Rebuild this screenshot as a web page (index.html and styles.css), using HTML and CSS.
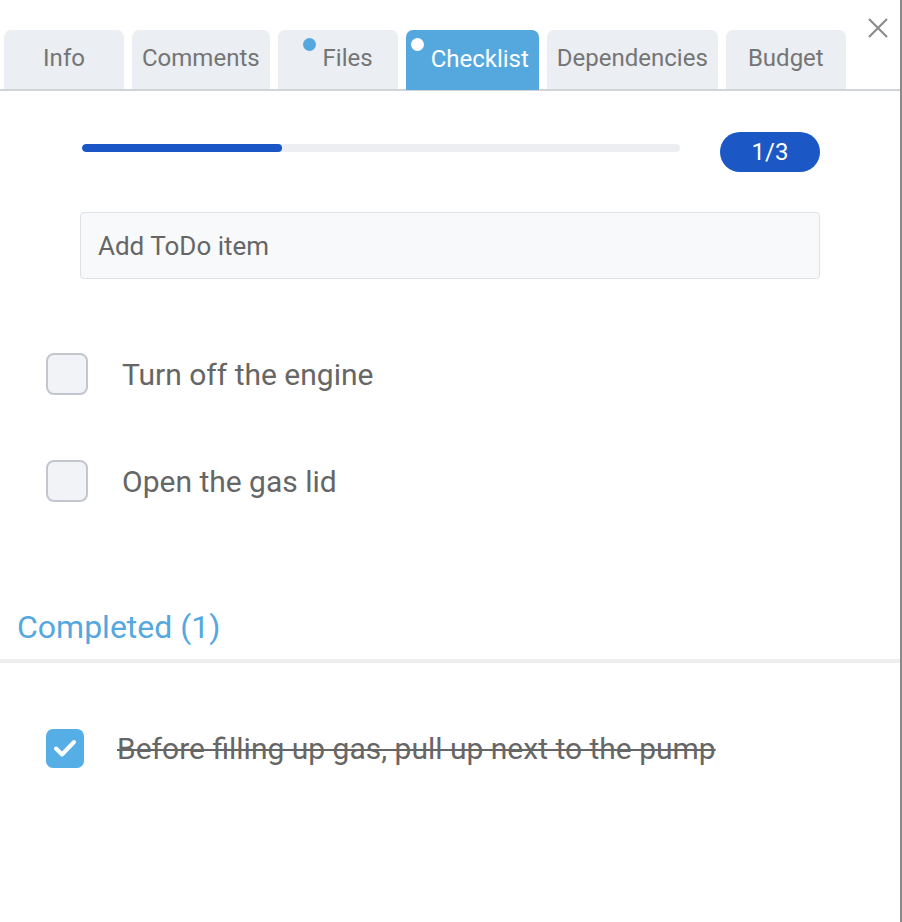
FILE: index.html
```html
<!DOCTYPE html>
<html>
<head>
<meta charset="utf-8">
<link rel="stylesheet" href="styles.css">
</head>
<body>
<div class="panel">
  <div class="tabs">
    <div class="tab">Info</div>
    <div class="tab">Comments</div>
    <div class="tab"><span class="dot"></span>Files</div>
    <div class="tab active"><span class="dot"></span>Checklist</div>
    <div class="tab">Dependencies</div>
    <div class="tab">Budget</div>
  </div>
  <button class="close" aria-label="Close">
    <svg width="20" height="20" viewBox="0 0 20 20"><path d="M1 1L19 19M19 1L1 19" stroke="#8c8c8c" stroke-width="2.2" fill="none"/></svg>
  </button>
  <div class="progress-row">
    <div class="track"><div class="fill" style="width:33.4%"></div></div>
    <div class="badge">1/3</div>
  </div>
  <div class="add">Add ToDo item</div>
  <ul class="items">
    <li class="item"><span class="box"></span><span class="label">Turn off the engine</span></li>
    <li class="item"><span class="box"></span><span class="label">Open the gas lid</span></li>
  </ul>
  <div class="completed-title">Completed (1)</div>
  <div class="divider"></div>
  <ul class="items done">
    <li class="item"><span class="box checked"><svg width="38" height="38" viewBox="0 0 38 38"><path d="M10 19.5L16 25.5L28 13" stroke="#fff" stroke-width="4" fill="none" stroke-linecap="round" stroke-linejoin="round"/></svg></span><span class="label">Before filling up gas, pull up next to the pump</span></li>
  </ul>
</div>
</body>
</html>
```
FILE: styles.css
```css
* { box-sizing: border-box; }
html, body { margin: 0; padding: 0; background: #fff; }
body { font-family: Roboto, "Liberation Sans", sans-serif; }
.panel {
  position: relative;
  width: 902px;
  height: 922px;
  border-right: 2px solid #8a8a8a;
  overflow: hidden;
}
.tabs {
  display: flex;
  gap: 8px;
  padding: 30px 0 0 4px;
  border-bottom: 2px solid #d0d4d9;
  height: 91px;
  align-items: flex-start;
}
.tab {
  height: 59px;
  min-width: 120px;
  padding: 0 10px 3px;
  background: #ebeef2;
  color: #757575;
  font-size: 24px;
  border-radius: 7px 7px 0 0;
  display: flex;
  align-items: center;
  justify-content: center;
}
.tab.active {
  background: #55a8de;
  color: #fff;
  height: 60px;
  padding: 0 10px 3px 5px;
}
.dot {
  align-self: flex-start;
  flex: none;
  width: 13px;
  height: 13px;
  margin: 8px 7px 0 0;
  border-radius: 50%;
  background: #55a8de;
}
.tab.active .dot { background: #fff; }
.close {
  position: absolute;
  left: 868px;
  top: 18px;
  width: 20px;
  height: 20px;
  padding: 0;
  border: 0;
  background: none;
  display: block;
}
.close svg { display: block; }
.progress-row {
  display: flex;
  align-items: flex-start;
  gap: 40px;
  margin: 41px 0 0 82px;
}
.track {
  width: 598px;
  height: 8px;
  margin-top: 12px;
  background: #eceef2;
  border-radius: 4px;
  overflow: hidden;
}
.fill {
  height: 100%;
  background: #1a56c6;
  border-radius: 4px;
}
.badge {
  width: 100px;
  height: 40px;
  border-radius: 20px;
  background: #1b57c5;
  color: #fff;
  font-size: 24px;
  display: flex;
  align-items: center;
  justify-content: center;
}
.add {
  margin: 40px 0 0 80px;
  width: 740px;
  height: 67px;
  border: 1px solid #dfe1e5;
  border-radius: 4px;
  background: #f8f9fb;
  color: #666;
  font-size: 26px;
  padding-left: 17px;
  display: flex;
  align-items: center;
}
.items {
  list-style: none;
  margin: 74px 0 0 46px;
  padding: 0;
  display: flex;
  flex-direction: column;
  gap: 65px;
}
.item {
  display: flex;
  align-items: center;
  height: 42px;
}
.box {
  width: 42px;
  height: 42px;
  border: 2px solid #c3c6cf;
  border-radius: 8px;
  background: #f2f3f6;
  flex: none;
}
.label {
  margin-left: 34px;
  font-size: 30px;
  color: #666;
}
.completed-title {
  margin: 106px 0 0 17px;
  font-size: 32px;
  line-height: 38px;
  color: #55a8de;
}
.divider {
  margin-top: 13px;
  height: 4px;
  background: #eeeeee;
}
.items.done { margin-top: 64px; }
.box.checked {
  width: 38px;
  height: 39px;
  border: 0;
  background: #55aee6;
  border-radius: 7px;
}
.box.checked svg { display: block; }
.done .label {
  margin-left: 33px;
  text-decoration: line-through;
  text-decoration-thickness: 2px;
}
```
